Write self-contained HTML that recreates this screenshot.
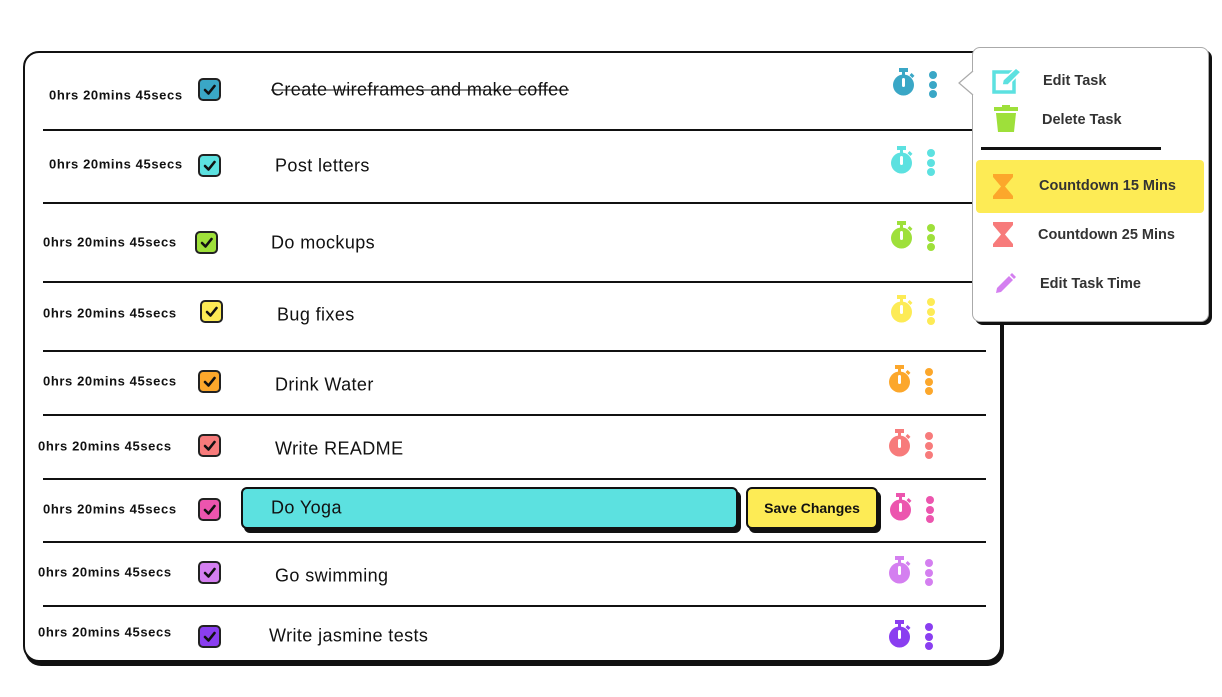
<!DOCTYPE html>
<html><head><style>
body{margin:0;width:1222px;height:697px;background:#fff;position:relative;overflow:hidden;font-family:"Liberation Sans",sans-serif;color:#111}
.a{position:absolute}
.card{left:23px;top:51px;width:975px;height:607px;border:2px solid #111;border-radius:16px;box-shadow:2px 4px 0 #111;background:#fff}
.sep{position:absolute;left:43px;width:943px;height:2px;background:#111}
.time{position:absolute;font-size:13px;font-weight:bold;letter-spacing:.6px;transform:translateY(-50%)}
.cb{position:absolute;width:19px;height:19px;border:2px solid #222;border-radius:5px}
.cb svg{position:absolute;left:2px;top:2px}
.txt{position:absolute;font-size:18px;letter-spacing:.4px;transform:translateY(-50%)}
.sw{position:absolute}
.dots{position:absolute;width:8px}
.dots i{display:block;width:8px;height:8px;border-radius:50%;margin-bottom:1.5px}
.menu{left:972px;top:47px;width:235px;height:273px;border:1px solid #aaa;border-radius:8px;background:#fff;box-shadow:3px 3px 0 #111}
.mi{position:absolute;font-size:14.5px;font-weight:bold;color:#333;transform:translateY(-50%)}
</style></head><body>
<div class="a card"></div>
<div class="sep" style="top:129px;width:958px"></div>
<div class="sep" style="top:202px;width:958px"></div>
<div class="sep" style="top:281px;width:958px"></div>
<div class="sep" style="top:350px"></div>
<div class="sep" style="top:414px"></div>
<div class="sep" style="top:478px"></div>
<div class="sep" style="top:541px"></div>
<div class="sep" style="top:605px"></div>

<div id="rows"></div>

<div class="a" style="left:241px;top:487px;width:493px;height:38px;background:#5ce1e0;border:2px solid #111;border-radius:6px;box-shadow:3px 4px 0 #111"></div>
<div class="txt" style="left:271px;top:508px">Do Yoga</div>
<div class="a" style="left:746px;top:487px;width:128px;height:38px;background:#fdeb55;border:2px solid #111;border-radius:6px;box-shadow:3px 4px 0 #111;font-size:14px;font-weight:bold;line-height:38px;text-align:center">Save Changes</div>

<div class="a menu"></div>
<svg class="a" style="left:957px;top:70px" width="18" height="26"><path d="M16 1 L2 13 L16 25" fill="#fff" stroke="#aaa" stroke-width="1.2"/></svg>
<svg class="a" style="left:992px;top:66px" width="32" height="28"><rect x="2" y="6" width="20" height="20" fill="none" stroke="#5ce1e0" stroke-width="3.5"/><path d="M10 19 L11 14 L24 2 L29 6 L16 19 Z" fill="#5ce1e0" stroke="#fff" stroke-width="1.5"/></svg>
<div class="mi" style="left:1043px;top:81px">Edit Task</div>
<svg class="a" style="left:994px;top:105px" width="24" height="28"><rect x="0" y="2" width="24" height="4" fill="#9ee03a"/><rect x="8" y="0" width="8" height="3" fill="#9ee03a"/><path d="M2 8 H22 L20 27 H4 Z" fill="#9ee03a"/></svg>
<div class="mi" style="left:1042px;top:120px">Delete Task</div>
<div class="a" style="left:981px;top:147px;width:180px;height:3px;background:#111"></div>
<div class="a" style="left:976px;top:160px;width:228px;height:53px;background:#fdeb55;border-radius:4px"></div>
<svg class="a" style="left:993px;top:174px" width="20" height="25"><path d="M0 0 H20 V3 L12 12.5 L20 22 V25 H0 V22 L8 12.5 L0 3 Z" fill="#fca72b"/></svg>
<div class="mi" style="left:1039px;top:186px">Countdown 15 Mins</div>
<svg class="a" style="left:993px;top:222px" width="20" height="25"><path d="M0 0 H20 V3 L12 12.5 L20 22 V25 H0 V22 L8 12.5 L0 3 Z" fill="#f77b7b"/></svg>
<div class="mi" style="left:1038px;top:235px">Countdown 25 Mins</div>
<svg class="a" style="left:994px;top:273px" width="22" height="22"><path d="M2 20 L3 15 L15 3 L19 7 L7 19 Z" fill="#d47ff0"/><path d="M16 2 L18 0 L22 4 L20 6Z" fill="#d47ff0"/></svg>
<div class="mi" style="left:1040px;top:284px">Edit Task Time</div>

<script>
const rows=[
[49,95,198,78,271,90,"Create wireframes and make coffee",892,68,"#3aa7c6",1],
[49,164,198,154,275,166,"Post letters",890,146,"#5ce1e0"],
[43,242,195,231,271,243,"Do mockups",890,221,"#9ee03a"],
[43,313,200,300,277,315,"Bug fixes",890,295,"#fdeb55"],
[43,381,198,370,275,385,"Drink Water",888,365,"#fca72b"],
[38,446,198,434,275,449,"Write README",888,429,"#f77b7b"],
[43,509,198,498,0,0,"",889,493,"#ec55ae"],
[38,572,198,561,275,576,"Go swimming",888,556,"#d47ff0"],
[38,632,198,625,269,636,"Write jasmine tests",888,620,"#8a3ef0"]];
let h="";
for(const r of rows){
h+=`<div class="time" style="left:${r[0]}px;top:${r[1]}px">0hrs 20mins 45secs</div>`;
h+=`<div class="cb" style="left:${r[2]}px;top:${r[3]}px;background:${r[9]}"><svg width="15" height="15"><path d="M3 8 L6.5 11.5 L12.5 4" fill="none" stroke="#111" stroke-width="2.6" stroke-linecap="round" stroke-linejoin="round"/></svg></div>`;
if(r[6])h+=`<div class="txt" style="left:${r[4]}px;top:${r[5]}px;${r[10]?'text-decoration:line-through':''}">${r[6]}</div>`;
h+=`<svg class="sw" style="left:${r[7]}px;top:${r[8]}px" width="24" height="30"><rect x="7" y="0" width="9" height="4" fill="${r[9]}"/><rect x="10" y="3" width="3" height="4" fill="${r[9]}"/><rect x="18" y="6" width="4" height="3" transform="rotate(45 20 7.5)" fill="${r[9]}"/><circle cx="11.5" cy="17" r="10.5" fill="${r[9]}"/><rect x="10" y="10" width="3" height="9" rx="1.5" fill="#fff"/></svg>`;
h+=`<div class="dots" style="left:${r[7]+37}px;top:${r[8]+3}px"><i style="background:${r[9]}"></i><i style="background:${r[9]}"></i><i style="background:${r[9]}"></i></div>`;
}
document.getElementById("rows").innerHTML=h;
</script>
</body></html>
